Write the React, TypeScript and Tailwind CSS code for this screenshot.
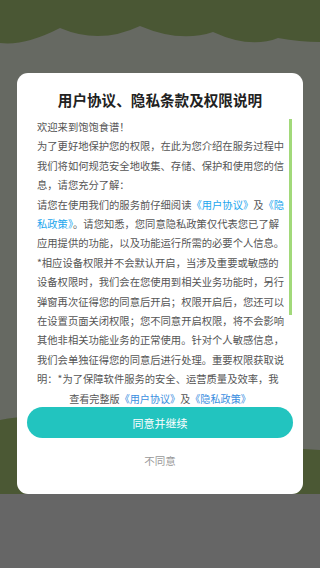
import React from "react";

const lines = [
  "欢迎来到饱饱食谱！",
  "为了更好地保护您的权限，在此为您介绍在服务过程中",
  "我们将如何规范安全地收集、存储、保护和使用您的信",
  "息，请您充分了解：",
];

const lines2 = [
  "应用提供的功能，以及功能运行所需的必要个人信息。",
  "*相应设备权限并不会默认开启，当涉及重要或敏感的",
  "设备权限时，我们会在您使用到相关业务功能时，另行",
  "弹窗再次征得您的同意后开启；权限开启后，您还可以",
  "在设置页面关闭权限；您不同意开启权限，将不会影响",
  "其他非相关功能业务的正常使用。针对个人敏感信息，",
  "我们会单独征得您的同意后进行处理。重要权限获取说",
  "明：*为了保障软件服务的安全、运营质量及效率，我",
];

export default function App() {
  const font = { fontFamily: '"Noto Sans CJK SC", "Noto Sans", sans-serif' };
  return (
    <div className="relative w-[320px] h-[568px] overflow-hidden bg-[#666962]" style={font}>
      <div className="flex flex-col h-full">
        <svg width="320" height="50" viewBox="0 0 320 50" className="block shrink-0">
          <rect width="320" height="50" fill="#666962" />
          <path
            d="M0 0 H320 V42 Q300 42 278 38 Q250 49 213 32 Q180 43 140 26 Q100 45 60 28 Q25 46 0 43 Z"
            fill="#4a5734"
          />
        </svg>
        <div className="flex-1 bg-[#666962]" />
        <svg width="320" height="84" viewBox="0 0 320 84" className="block shrink-0">
          <rect width="320" height="84" fill="#666962" />
          <path d="M0 10 Q40 2 90 14 Q200 34 320 40 V84 H0 Z" fill="#4b5834" />
        </svg>
        <div className="h-[74px] shrink-0 bg-[#666666]" />
      </div>

      <div className="absolute left-[17px] top-[73px] w-[286px] h-[421px] bg-white rounded-[11px] flex flex-col">
        <div className="pt-[17px] text-center text-[14.6px] leading-[20px] font-bold text-[#222222]">
          用户协议、隐私条款及权限说明
        </div>
        <div className="relative mt-[7px] h-[272px] overflow-hidden pl-[20px] text-[10.3px] leading-[19.4px] text-[#555555] whitespace-nowrap">
          {lines.map((l) => (
            <div key={l}>{l}</div>
          ))}
          <div>
            请您在使用我们的服务前仔细阅读<span className="text-[#1aa6ee]">《用户协议》</span>及
            <span className="text-[#1aa6ee]">《隐</span>
          </div>
          <div>
            <span className="text-[#1aa6ee]">私政策》</span>。请您知悉，您同意隐私政策仅代表您已了解
          </div>
          {lines2.map((l) => (
            <div key={l}>{l}</div>
          ))}
          <div className="absolute right-[11px] top-[2px] w-[3px] h-[196px] bg-[#a2d97a]" />
        </div>
        <div className="text-center text-[10.1px] leading-[19.4px] text-[#555555] whitespace-nowrap">
          查看完整版<span className="text-[#3a8ee0]">《用户协议》</span>及<span className="text-[#3a8ee0]">《隐私政策》</span>
        </div>
        <div className="px-[10px] mt-[-1px]">
          <div className="h-[31px] rounded-full bg-[#22c4bf] flex items-center justify-center text-white text-[11px]">
            同意并继续
          </div>
        </div>
        <div className="mt-[16px] text-center text-[10.5px] leading-[14px] text-[#999999]">不同意</div>
      </div>
    </div>
  );
}
